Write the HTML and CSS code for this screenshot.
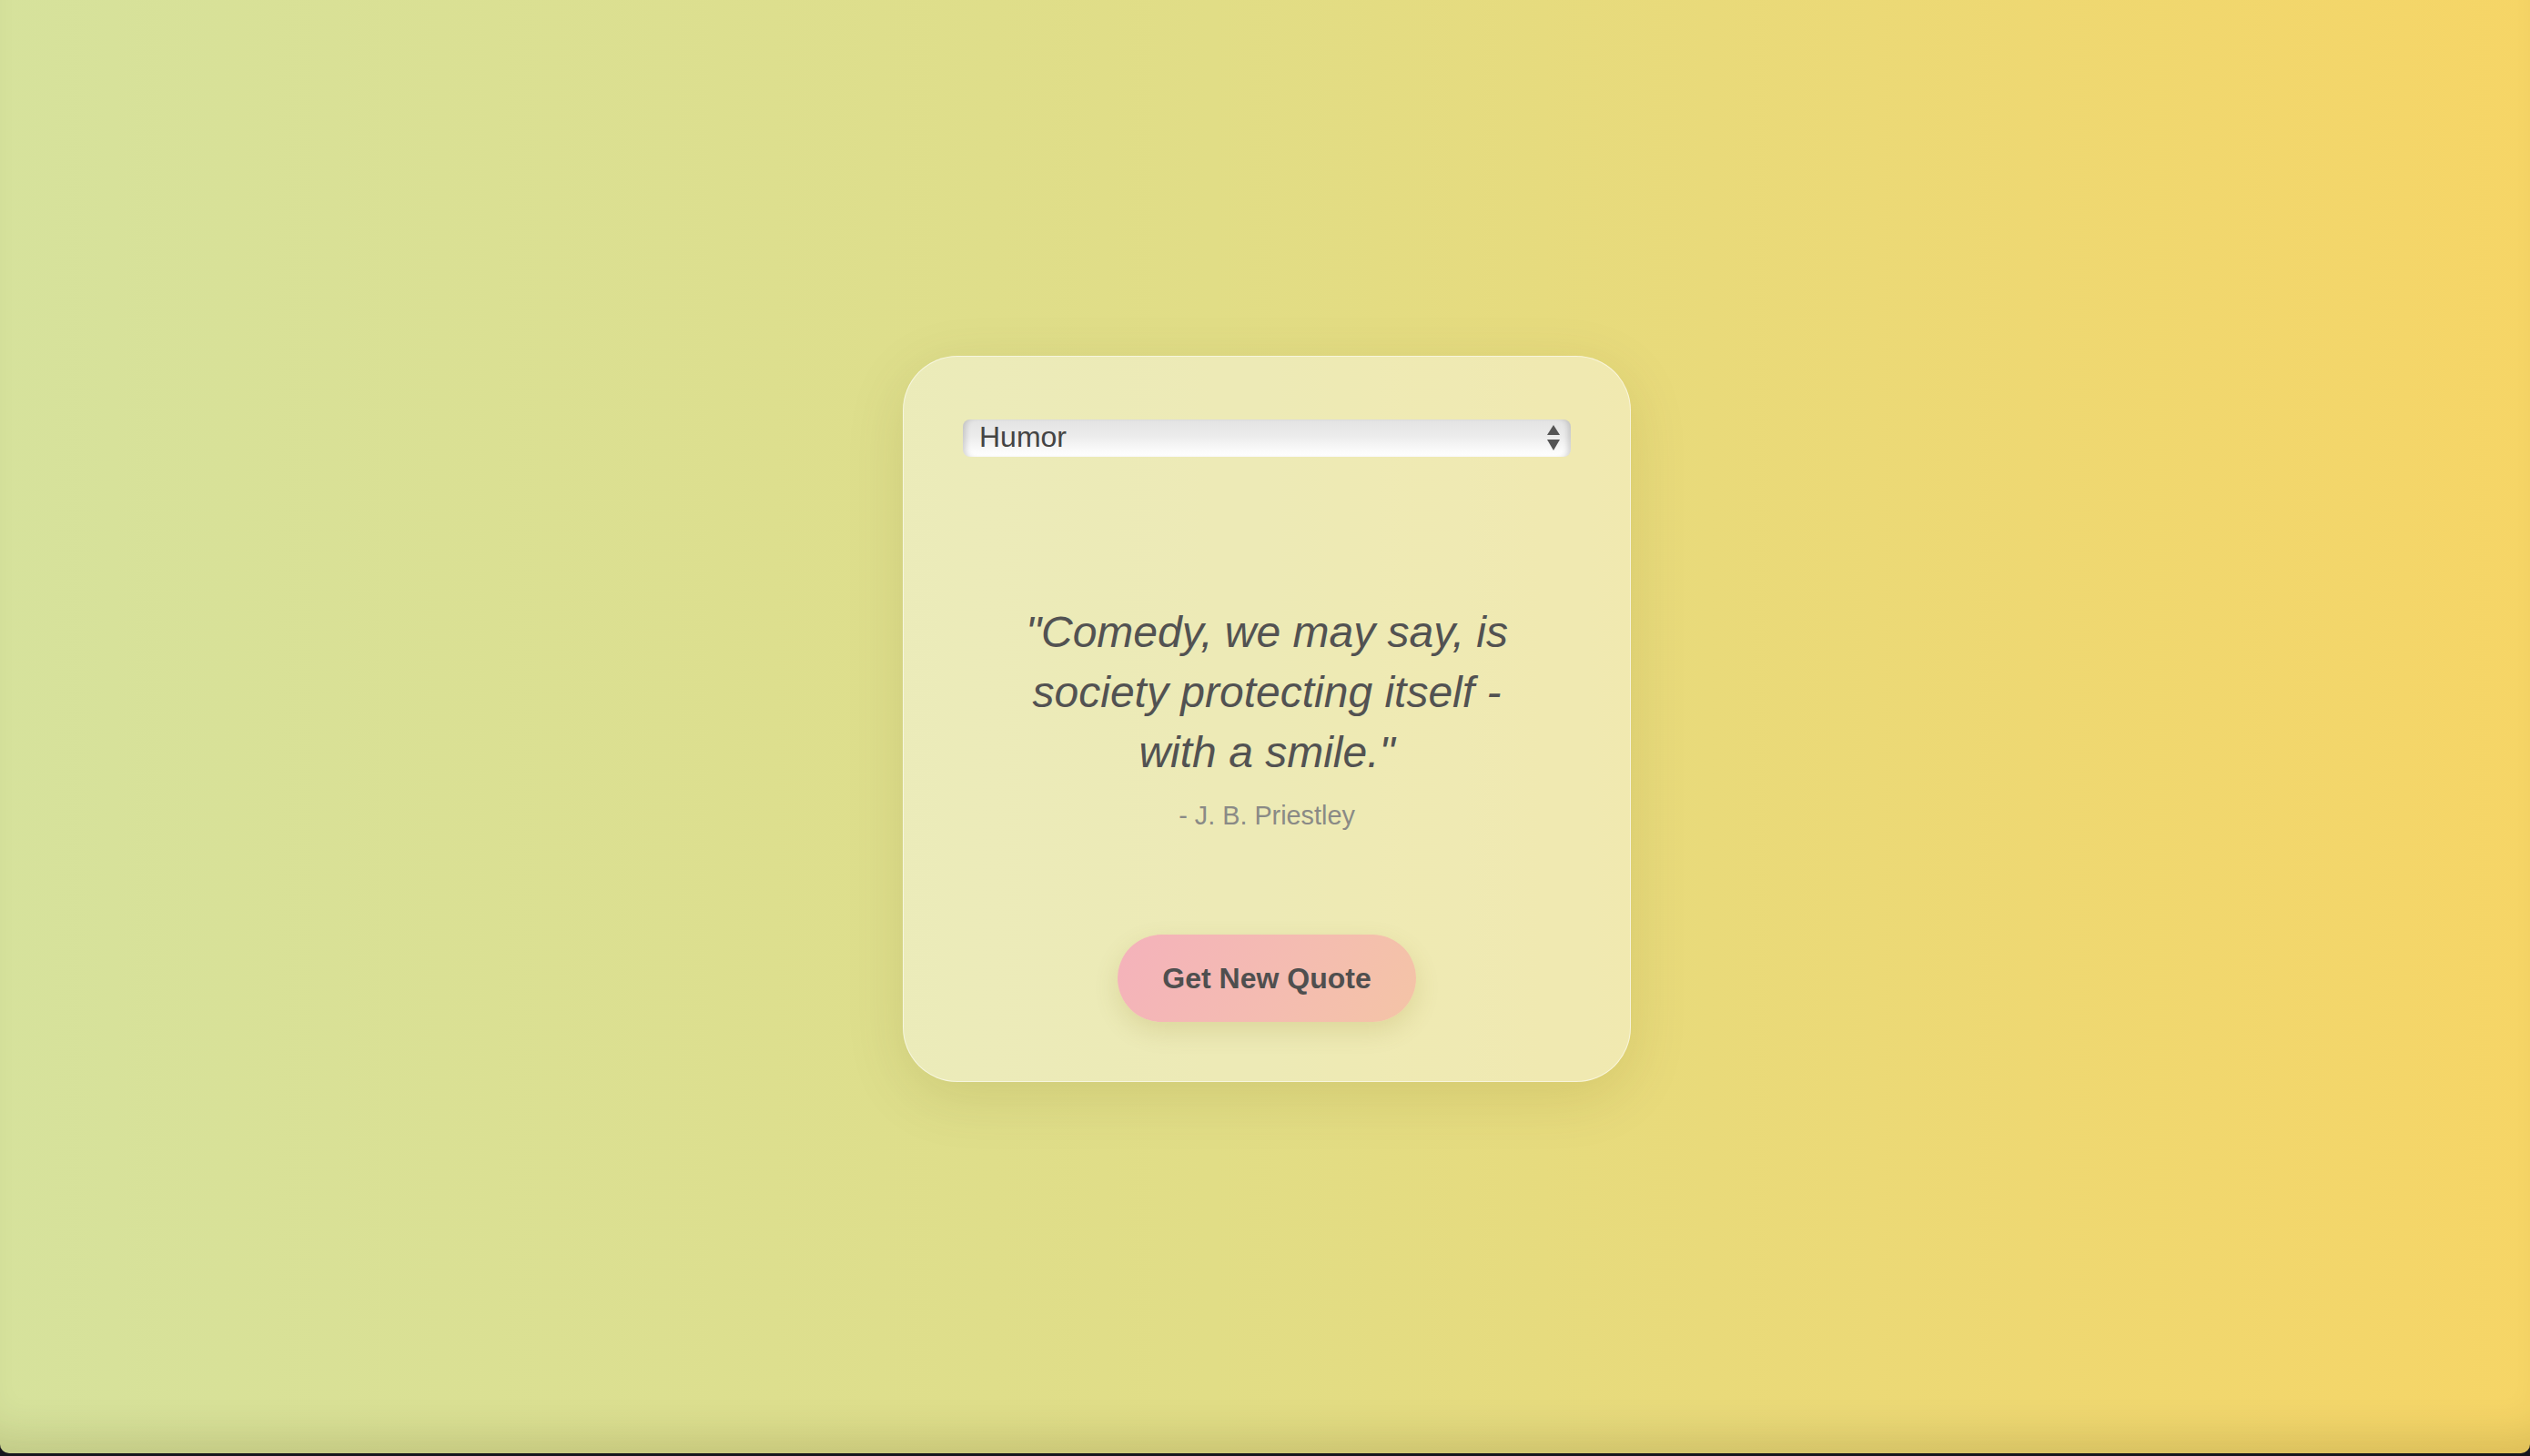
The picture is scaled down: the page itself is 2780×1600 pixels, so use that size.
FILE: index.html
```html
<!DOCTYPE html>
<html lang="en">
<head>
<meta charset="utf-8">
<title>Quote Generator</title>
<link rel="stylesheet" href="styles.css">
</head>
<body>
  <main class="card">
    <div class="select-wrap">
      <select class="category">
        <option selected>Humor</option>
        <option>Life</option>
        <option>Wisdom</option>
      </select>
      <svg class="select-arrows" width="14" height="28" viewBox="0 0 14 28" aria-hidden="true">
        <polygon points="7,0 14,11 0,11" fill="#555"/>
        <polygon points="0,16 14,16 7,28" fill="#555"/>
      </svg>
    </div>
    <blockquote class="quote">
      <p class="quote-text">"Comedy, we may say, is society protecting itself - with a smile."</p>
      <p class="quote-author">- J. B. Priestley</p>
    </blockquote>
    <button class="new-quote" type="button">Get New Quote</button>
  </main>
</body>
</html>
```

FILE: styles.css
```css
* {
  box-sizing: border-box;
}

html {
  margin: 0;
  background: #17161d;
}

body {
  margin: 0;
  height: 1597px;
  padding: 0 0 18px 4px;
  display: flex;
  align-items: center;
  justify-content: center;
  font-family: "Liberation Sans", Arial, Helvetica, sans-serif;
  background: linear-gradient(to right, #d6e29c 0%, #e1dd86 48%, #f6d566 100%);
  border-radius: 0 0 10px 10px;
  box-shadow: inset 0 -46px 46px -30px rgba(60, 50, 0, 0.16);
}

.card {
  width: 800px;
  height: 798px;
  padding: 69px 65px 64px;
  display: flex;
  flex-direction: column;
  align-items: center;
  background: rgba(255, 255, 255, 0.4);
  border: 1px solid rgba(255, 255, 255, 0.55);
  border-radius: 60px;
  box-shadow: 0 16px 64px rgba(90, 80, 0, 0.13);
}

.select-wrap {
  position: relative;
  width: 100%;
  height: 41px;
}

.category {
  appearance: none;
  -webkit-appearance: none;
  width: 100%;
  height: 41px;
  margin: 0;
  padding: 0 40px 2px 18px;
  border: none;
  border-radius: 8px;
  font-family: "Liberation Sans", Arial, Helvetica, sans-serif;
  font-size: 32px;
  line-height: 39px;
  color: #444;
  background: linear-gradient(to bottom, #e3e3e3 0%, #ececec 45%, #fbfbfb 85%, #ffffff 100%);
  box-shadow: inset 7px 0 6px -4px rgba(0, 0, 0, 0.16), inset -7px 0 6px -4px rgba(0, 0, 0, 0.16);
  outline: none;
}

.select-arrows {
  position: absolute;
  right: 12px;
  top: 6px;
  pointer-events: none;
}

.quote {
  margin: 160px 0 0;
  padding: 0 40px;
  width: 100%;
  text-align: center;
}

.quote-text {
  margin: 0;
  font-size: 48px;
  line-height: 66px;
  font-style: italic;
  color: #525252;
}

.quote-author {
  margin: 20px 0 0;
  font-size: 28.8px;
  line-height: 33px;
  color: #8a8a86;
}

.new-quote {
  margin-top: 114px;
  padding: 32px 49px;
  border: none;
  border-radius: 48px;
  font-family: "Liberation Sans", Arial, Helvetica, sans-serif;
  font-size: 32px;
  line-height: 32px;
  font-weight: 700;
  color: #4f4f4f;
  background: linear-gradient(120deg, #f4b2bb 0%, #f4bcb1 55%, #f4c4a6 100%);
  box-shadow: 0 10px 28px rgba(120, 100, 0, 0.14);
  cursor: pointer;
}
```
